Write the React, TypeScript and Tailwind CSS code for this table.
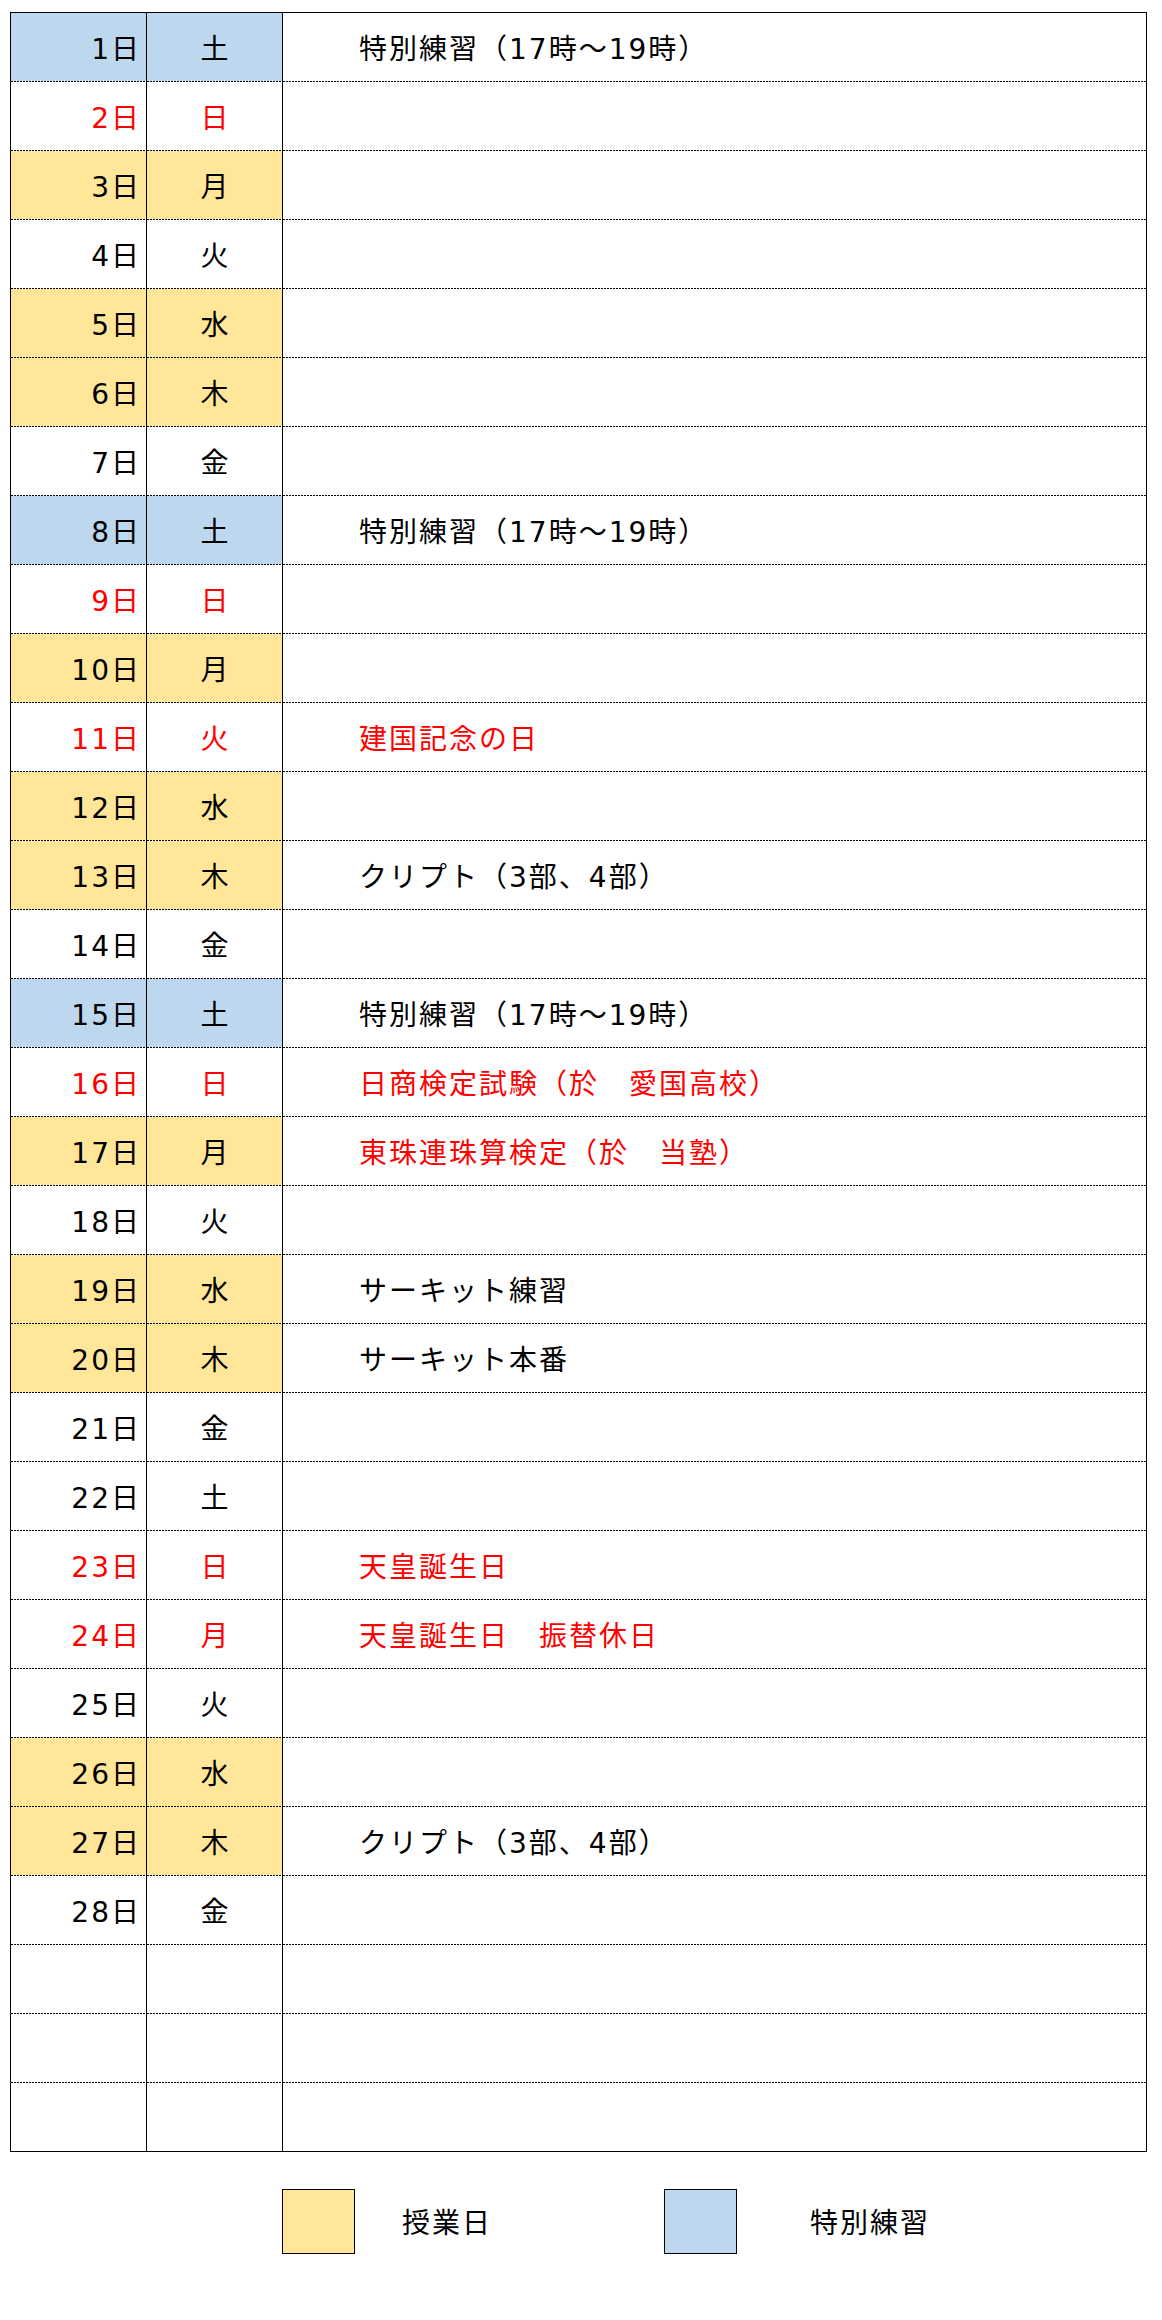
type Row = {
  d?: number;
  w?: string;
  bg?: 'y' | 'b';
  red?: boolean;
  note?: string;
  noteRed?: boolean;
};

const rows: Row[] = [
  { d: 1, w: '土', bg: 'b', note: '特別練習（17時〜19時）' },
  { d: 2, w: '日', red: true },
  { d: 3, w: '月', bg: 'y' },
  { d: 4, w: '火' },
  { d: 5, w: '水', bg: 'y' },
  { d: 6, w: '木', bg: 'y' },
  { d: 7, w: '金' },
  { d: 8, w: '土', bg: 'b', note: '特別練習（17時〜19時）' },
  { d: 9, w: '日', red: true },
  { d: 10, w: '月', bg: 'y' },
  { d: 11, w: '火', red: true, note: '建国記念の日', noteRed: true },
  { d: 12, w: '水', bg: 'y' },
  { d: 13, w: '木', bg: 'y', note: 'クリプト（3部、4部）' },
  { d: 14, w: '金' },
  { d: 15, w: '土', bg: 'b', note: '特別練習（17時〜19時）' },
  { d: 16, w: '日', red: true, note: '日商検定試験（於　愛国高校）', noteRed: true },
  { d: 17, w: '月', bg: 'y', note: '東珠連珠算検定（於　当塾）', noteRed: true },
  { d: 18, w: '火' },
  { d: 19, w: '水', bg: 'y', note: 'サーキット練習' },
  { d: 20, w: '木', bg: 'y', note: 'サーキット本番' },
  { d: 21, w: '金' },
  { d: 22, w: '土' },
  { d: 23, w: '日', red: true, note: '天皇誕生日', noteRed: true },
  { d: 24, w: '月', red: true, note: '天皇誕生日　振替休日', noteRed: true },
  { d: 25, w: '火' },
  { d: 26, w: '水', bg: 'y' },
  { d: 27, w: '木', bg: 'y', note: 'クリプト（3部、4部）' },
  { d: 28, w: '金' },
  {},
  {},
  {},
];

const fill = (bg?: 'y' | 'b') =>
  bg === 'y' ? 'bg-[#ffe699]' : bg === 'b' ? 'bg-[#bdd7ee]' : 'bg-white';

function Dash() {
  return <div className="h-px bg-[repeating-linear-gradient(to_right,#000_0_2px,transparent_2px_3px)]" />;
}

function Cell({ children, className, last, border }: { children?: React.ReactNode; className: string; last: boolean; border: boolean }) {
  return (
    <div className={border ? 'flex flex-col border-r border-black' : 'flex flex-col'}>
      <div className={`flex h-[68px] items-center pt-[5px] ${className}`}>{children}</div>
      {!last && <Dash />}
    </div>
  );
}

export default function App() {
  return (
    <div className="min-h-[2320px] bg-white pl-[10px] pt-[12px] font-['DejaVu_Sans','Noto_Sans_CJK_JP',sans-serif] text-[28px] leading-none text-black">
      <div className="w-[1137px] border border-black">
        {rows.map((r, i) => {
          const last = i === rows.length - 1;
          const dayColor = r.red ? 'text-[#ff0000]' : 'text-black';
          return (
            <div key={i} className="grid grid-cols-[136px_136px_1fr]">
              <Cell border last={last} className={`justify-end pr-[5px] tracking-[2px] ${fill(r.bg)} ${dayColor}`}>
                {r.d ? `${r.d}日` : ''}
              </Cell>
              <Cell border last={last} className={`justify-center ${fill(r.bg)} ${dayColor}`}>
                {r.w}
              </Cell>
              <Cell border={false} last={last} className={`pl-[76px] tracking-[2px] ${r.noteRed ? 'text-[#ff0000]' : 'text-black'}`}>
                {r.note}
              </Cell>
            </div>
          );
        })}
      </div>

      <div className="mt-[37px] flex items-center tracking-[2px]">
        <div className="ml-[272px] h-[65px] w-[73px] border border-black bg-[#ffe699]" />
        <span className="ml-[47px] pt-[4px]">授業日</span>
        <div className="ml-[172px] h-[65px] w-[73px] border border-black bg-[#bdd7ee]" />
        <span className="ml-[73px] pt-[4px]">特別練習</span>
      </div>
    </div>
  );
}
